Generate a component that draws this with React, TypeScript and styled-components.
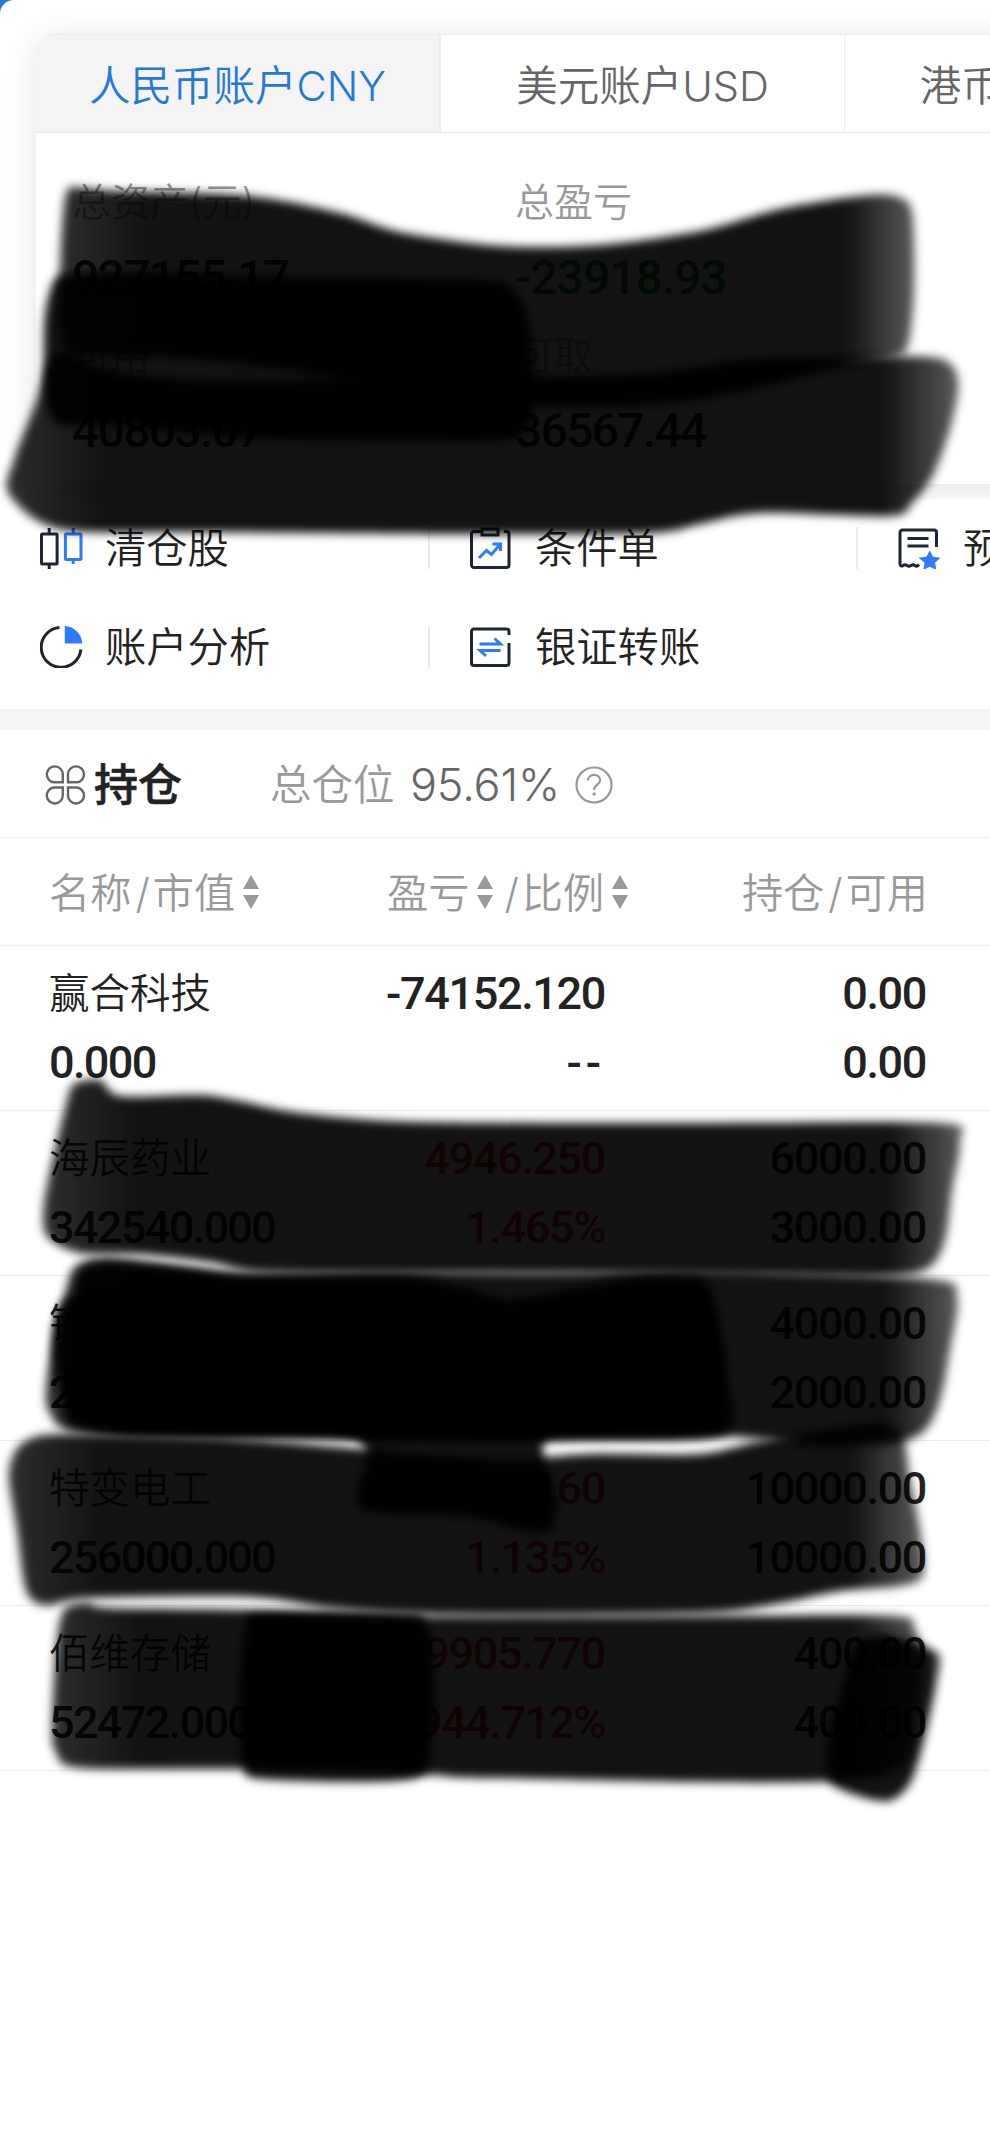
import React from "react";
import styled, { createGlobalStyle } from "styled-components";

const Global = createGlobalStyle`
  * { box-sizing: border-box; }
  body { margin: 0; background: #2479d8; overflow: hidden; }
`;

const cjk = `Inter, "Noto Sans CJK SC", sans-serif`;

const Page = styled.div`
  position: relative;
  width: 990px;
  height: 2142px;
  overflow: hidden;
  background: #fff;
  border-top-left-radius: 14px;
  font-family: ${cjk};
  color: #222;
`;

const AccountArea = styled.section`
  height: 499px;
  padding: 34px 0 0 36px;
  overflow: hidden;
`;

const AccountCard = styled.div`
  width: 1214px;
  height: 450px;
  background: #fff;
  border-top-left-radius: 18px;
  box-shadow: 0 4px 38px rgba(0, 0, 0, 0.11);
  overflow: hidden;
`;

const Tabs = styled.div`
  display: flex;
  height: 99px;
  border-top: 1px solid #ececec;
  border-bottom: 1px solid #e9e9e9;
`;

const Tab = styled.div<{ $active?: boolean }>`
  flex: 0 0 auto;
  width: ${(p) => (p.$active ? 405 : 404)}px;
  padding-top: 5px;
  border-right: ${(p) => (p.$active ? 2 : 1)}px solid #ececec;
  background: ${(p) => (p.$active ? "#f4f4f4" : "#fff")};
  color: ${(p) => (p.$active ? "#2479d8" : "#666")};
  font-size: 41.5px;
  font-weight: 350;
  line-height: 93px;
  text-align: center;
  white-space: nowrap;
`;

const Summary = styled.div`
  display: grid;
  grid-template-columns: 443px 1fr;
  grid-template-rows: 75px 77px 77px 75px;
  padding: 31px 0 0 36px;
  align-items: center;
`;

const SummaryLabel = styled.div`
  font-size: 39px;
  line-height: 1;
  font-weight: 350;
  color: #999;
`;

const SummaryValue = styled.div<{ $loss?: boolean }>`
  font: 500 48px/1 Roboto, sans-serif;
  letter-spacing: ${(p) => (p.$loss ? -1 : -1.7)}px;
  color: ${(p) => (p.$loss ? "#0a8a1c" : "#222")};
`;

const Actions = styled.section`
  display: grid;
  grid-template-columns: 430px 428px 428px;
  grid-template-rows: 98px 99px;
  height: 210px;
  width: 990px;
  overflow: hidden;
`;

const Action = styled.div<{ $last?: boolean }>`
  display: flex;
  align-items: center;
  align-self: center;
  height: 42px;
  padding-left: 40px;
  white-space: nowrap;
  font-size: 41.3px;
  line-height: 42px;
  border-right: ${(p) => (p.$last ? "0" : "2px solid #ebebeb")};

  svg {
    flex: none;
    margin-right: 22px;
  }
`;

const ActionText = styled.span`
  font-weight: 350;
`;

const Band = styled.div`
  height: 21px;
  background: #f4f4f4;
`;

const TitleBar = styled.header`
  display: flex;
  align-items: center;
  height: 108px;
  padding: 2px 0 0 45px;
  border-bottom: 1px solid #ececec;
  line-height: 60px;
`;

const Title = styled.h2`
  margin: 0 0 0 8px;
  width: 176px;
  font-size: 44px;
  font-weight: 500;
  -webkit-text-stroke: 0.6px #222;
`;

const PositionLabel = styled.span`
  width: 140px;
  font-size: 41.5px;
  font-weight: 350;
  color: #999;
`;

const PositionValue = styled.span`
  width: 165px;
  font-size: 45px;
  font-weight: 350;
  letter-spacing: -0.2px;
  color: #666;
`;

const HeadRow = styled.div`
  display: grid;
  grid-template-columns: 338px 292px 296px;
  height: 108px;
  padding: 2px 0 0 49px;
  align-items: center;
  border-bottom: 1px solid #ececec;
  font-size: 41.2px;
  font-weight: 350;
  line-height: 60px;
  color: #999;
`;

const HeadCell = styled.div<{ $right?: boolean }>`
  display: flex;
  align-items: center;
  justify-content: ${(p) => (p.$right ? "flex-end" : "flex-start")};
  padding-right: ${(p) => (p.$right ? 47 : 0)}px;
  width: ${(p) => (p.$right ? 345 : 300)}px;
  justify-self: ${(p) => (p.$right ? "end" : "start")};
  white-space: nowrap;
`;

const Slash = styled.span`
  padding: 0 3px 0 4px;
`;

const HoldingRow = styled.div`
  display: grid;
  grid-template-columns: 280px 276px 321px;
  grid-template-rows: 69px 69px;
  height: 165px;
  padding: 13px 0 0 49px;
  align-items: center;
  border-bottom: 1px solid #ececec;
`;

const StockName = styled.div`
  font-size: 40.5px;
  font-weight: 350;
  line-height: 60px;
  white-space: nowrap;
`;

const Figure = styled.div<{ $left?: boolean; $gain?: boolean }>`
  font: 500 45px/60px Roboto, sans-serif;
  padding-top: 1px;
  letter-spacing: ${(p) => (p.$left ? -1.65 : -1.35)}px;
  text-align: ${(p) => (p.$left ? "left" : "right")};
  color: ${(p) => (p.$gain ? "#e0141e" : "#222")};
  white-space: nowrap;
`;

const Dashes = styled.span`
  letter-spacing: 4px;
`;

const MarkerLayer = styled.svg`
  position: absolute;
  left: 0;
  top: 0;
  pointer-events: none;
`;

const navy = "#1d2433";
const blue = "#2f7bff";

const CandleIcon = () => (
  <svg width="43" height="42" viewBox="0 0 43 42" fill="none" strokeWidth="3">
    <g stroke={navy}>
      <rect x="1.5" y="7" width="15.6" height="30" rx="1" />
      <path d="M9.200 1v6M9.200 37v5" />
    </g>
    <g stroke={blue}>
      <rect x="25.400" y="7" width="15.600" height="25.500" rx="1" />
      <path d="M33.200 1v6M33.200 32v5" />
    </g>
  </svg>
);

const ConditionIcon = () => (
  <svg width="43" height="42" viewBox="0 0 43 42" fill="none" strokeWidth="3">
    <path
      d="M12 4.500H4a2.500 2.500 0 0 0-2.500 2.500v31A2.500 2.500 0 0 0 4 40.500h32.500A2.500 2.500 0 0 0 39 38V7a2.500 2.500 0 0 0-2.500-2.500H34M12 2h16v6H12z"
      stroke={navy}
    />
    <path d="m9 31 7.500-7.500 5 4L30 17.500M22.500 17H30.500v7" stroke={blue} />
  </svg>
);

const BookIcon = () => (
  <svg width="43" height="42" viewBox="0 0 43 42" fill="none" strokeWidth="3">
    <path
      d="M38.500 20V5.500A2.500 2.500 0 0 0 36 3H4.500A2.500 2.500 0 0 0 2 5.500V37.500Q3 40 5 38.500t4 0 4 0 4 0 4-1"
      stroke={navy}
    />
    <path d="M9.500 11.500H30.500M9.500 19H30.500" stroke={navy} />
    <path
      d="m31.800 23.500 3.200 6.300 7.500 1-5.500 5 1.500 7.200-6.700-3.300-6.700 3.300 1.500-7.200-6-5 7.800-1z"
      fill={blue}
    />
  </svg>
);

const PieIcon = () => (
  <svg width="43" height="42" viewBox="0 0 43 42" fill="none">
    <path d="M19.500 1.600A19.900 19.900 0 1 0 40.900 23.500" stroke={navy} strokeWidth="3" />
    <path d="M24.800 0A18.500 18.500 0 0 1 42.300 17.500H24.800z" fill={blue} />
  </svg>
);

const TransferIcon = () => (
  <svg width="43" height="42" viewBox="0 0 43 42" fill="none" strokeWidth="3">
    <path
      d="M39 9V5.500A2.500 2.500 0 0 0 36.500 3H4A2.500 2.500 0 0 0 1.500 5.500V37A2.500 2.500 0 0 0 4 39.500H36.500A2.500 2.500 0 0 0 39 37V17"
      stroke={navy}
    />
    <path d="M9.500 18H30.500L24.500 12.500M30.500 24.500H10l6 5.500" stroke={blue} />
  </svg>
);

const CloverIcon = () => (
  <svg width="41" height="40" viewBox="0 0 41 40" fill="none" stroke="#666" strokeWidth="2.400">
    <path d="M17.800 17.300H8.800A8 8 0 1 1 17.800 9.300z" />
    <path d="M23 17.300H32A8 8 0 1 0 23 9.300z" />
    <path d="M17.800 22.500H8.800A8 8 0 1 0 17.800 30.500z" />
    <path d="M23 22.500H32A8 8 0 1 1 23 30.500z" />
  </svg>
);

const HelpIcon = () => (
  <svg width="38" height="38" viewBox="0 0 38 38" fill="none" stroke="#999">
    <circle cx="19" cy="19" r="17.500" strokeWidth="2.200" />
    <path
      d="M13 14.500C13 7 25.200 7 25.200 14.300 25.200 18.500 19.200 18.500 19.200 24"
      strokeWidth="2.200"
    />
    <circle cx="19.200" cy="28" r="1.800" fill="#999" stroke="none" />
  </svg>
);

const SortSvg = styled.svg`
  flex: none;
  margin: 0 7px 2px 8px;
`;

const SortIcon = () => (
  <SortSvg width="16" height="34" viewBox="0 0 16 34" fill="#999">
    <path d="M8 0 16 14H0zM8 34 0 20H16z" />
  </SortSvg>
);

type Pt = [number, number];

/** Closed smooth curve through the given points. */
function smooth(pts: Pt[]): string {
  const n = pts.length;
  const at = (i: number) => pts[(i + n) % n];
  let d = `M${pts[0][0]} ${pts[0][1]}`;
  for (let i = 0; i < n; i++) {
    const [a, b, c, e] = [at(i - 1), at(i), at(i + 1), at(i + 2)];
    const k = 7;
    d += `C${b[0] + (c[0] - a[0]) / k} ${b[1] + (c[1] - a[1]) / k} ${c[0] - (e[0] - b[0]) / k} ${
      c[1] - (e[1] - b[1]) / k
    } ${c[0]} ${c[1]}`;
  }
  return d + "Z";
}

const markers: { soft?: boolean; pts: Pt[] }[] = [
  {
    soft: true,
    pts: [[66, 194], [82, 188], [120, 191], [250, 196], [340, 213], [400, 232], [500, 246], [600, 245], [700, 231], [780, 209], [860, 196], [895, 196], [912, 212], [914, 290], [908, 345], [893, 357], [820, 372], [740, 392], [650, 405], [500, 406], [400, 394], [300, 372], [180, 358], [90, 356], [62, 345], [60, 270]],
  },
  {
    pts: [[62, 275], [120, 272], [300, 277], [480, 280], [515, 292], [530, 330], [532, 400], [515, 438], [400, 441], [250, 438], [110, 425], [60, 425], [46, 400], [44, 330], [49, 295]],
  },
  {
    soft: true,
    pts: [[48, 364], [65, 352], [100, 368], [180, 379], [350, 379], [500, 378], [650, 373], [750, 359], [850, 357], [938, 358], [958, 380], [951, 425], [933, 475], [912, 503], [890, 516], [760, 513], [700, 524], [650, 533], [480, 534], [200, 532], [60, 529], [9, 494], [14, 460], [36, 402]],
  },
  {
    soft: true,
    pts: [[74, 1084], [100, 1080], [120, 1096], [200, 1095], [240, 1101], [300, 1113], [420, 1122], [700, 1123], [940, 1123], [960, 1141], [952, 1190], [945, 1240], [928, 1268], [880, 1276], [700, 1274], [400, 1273], [260, 1272], [210, 1262], [140, 1254], [80, 1253], [47, 1236], [44, 1205], [55, 1150], [66, 1105]],
  },
  {
    soft: true,
    pts: [[76, 1266], [110, 1258], [200, 1269], [250, 1274], [400, 1272], [560, 1273], [700, 1271], [930, 1279], [957, 1298], [950, 1350], [940, 1400], [925, 1430], [895, 1443], [820, 1446], [760, 1439], [700, 1436], [500, 1442], [340, 1439], [200, 1437], [75, 1432], [50, 1413], [46, 1390], [55, 1330], [66, 1290]],
  },
  {
    pts: [[84, 1268], [160, 1267], [250, 1276], [400, 1276], [470, 1289], [510, 1299], [580, 1287], [640, 1277], [700, 1279], [714, 1300], [720, 1360], [724, 1434], [560, 1438], [350, 1436], [200, 1434], [80, 1428], [64, 1400], [74, 1330]],
  },
  {
    pts: [[66, 1300], [250, 1290], [500, 1320], [700, 1300], [712, 1420], [552, 1432], [556, 1500], [550, 1532], [520, 1530], [470, 1517], [380, 1513], [357, 1500], [348, 1435], [90, 1425]],
  },
  {
    soft: true,
    pts: [[26, 1441], [60, 1434], [200, 1437], [280, 1442], [350, 1448], [500, 1459], [590, 1454], [700, 1454], [760, 1441], [850, 1426], [890, 1424], [904, 1440], [910, 1480], [920, 1530], [923, 1575], [900, 1586], [840, 1591], [770, 1605], [700, 1613], [500, 1615], [400, 1613], [330, 1608], [250, 1597], [90, 1598], [45, 1605], [26, 1590], [17, 1530], [9, 1480], [13, 1456]],
  },
  {
    soft: true,
    pts: [[64, 1610], [88, 1603], [110, 1608], [250, 1610], [400, 1616], [700, 1616], [893, 1616], [914, 1628], [922, 1655], [915, 1710], [870, 1778], [490, 1778], [430, 1775], [240, 1769], [80, 1768], [56, 1752], [52, 1730], [56, 1650]],
  },
  {
    pts: [[260, 1614], [400, 1614], [426, 1624], [434, 1680], [431, 1745], [410, 1779], [262, 1779], [243, 1762], [239, 1700], [245, 1630]],
  },
  {
    soft: true,
    pts: [[855, 1645], [880, 1634], [915, 1643], [939, 1655], [937, 1680], [924, 1740], [910, 1783], [888, 1801], [850, 1793], [828, 1778], [829, 1735], [845, 1680]],
  },
];

const Markers = () => (
  <MarkerLayer width="990" height="2142" viewBox="0 0 990 2142">
    <defs>
      <filter id="feather" x="-5%" y="-10%" width="110%" height="120%">
        <feGaussianBlur stdDeviation="4.6" />
      </filter>
      <linearGradient id="ends">
        <stop offset="0" stopColor="#000" stopOpacity="0.82" />
        <stop offset="0.1" stopColor="#000" stopOpacity="0.93" />
        <stop offset="0.92" stopColor="#000" stopOpacity="0.93" />
        <stop offset="1" stopColor="#000" stopOpacity="0.65" />
      </linearGradient>
    </defs>
    {markers.map((m, i) => (
      <path
        key={i}
        d={smooth(m.pts)}
        fill={m.soft ? "url(#ends)" : "rgba(0,0,0,0.93)"}
        filter="url(#feather)"
      />
    ))}
  </MarkerLayer>
);

interface Holding {
  name: string;
  value: string;
  profit: string;
  ratio: string;
  amount: string;
  usable: string;
  gain?: boolean;
}

const holdings: Holding[] = [
  { name: "赢合科技", value: "0.000", profit: "-74152.120", ratio: "--", amount: "0.00", usable: "0.00" },
  { name: "海辰药业", value: "342540.000", profit: "4946.250", ratio: "1.465%", amount: "6000.00", usable: "3000.00", gain: true },
  { name: "锦", value: "2", profit: "", ratio: "", amount: "4000.00", usable: "2000.00", gain: true },
  { name: "特变电工", value: "256000.000", profit: "2.160", ratio: "1.135%", amount: "10000.00", usable: "10000.00", gain: true },
  { name: "佰维存储", value: "52472.000", profit: "9905.770", ratio: "944.712%", amount: "400.00", usable: "400.00", gain: true },
];

export default function App() {
  return (
    <>
      <Global />
      <Page>
        <AccountArea>
          <AccountCard>
            <Tabs>
              <Tab $active>人民币账户CNY</Tab>
              <Tab>美元账户USD</Tab>
              <Tab>港币账户HKD</Tab>
            </Tabs>
            <Summary>
              <SummaryLabel>总资产(元)</SummaryLabel>
              <SummaryLabel>总盈亏</SummaryLabel>
              <SummaryValue>927155.17</SummaryValue>
              <SummaryValue $loss>-23918.93</SummaryValue>
              <SummaryLabel>可用</SummaryLabel>
              <SummaryLabel>可取</SummaryLabel>
              <SummaryValue>40803.07</SummaryValue>
              <SummaryValue>36567.44</SummaryValue>
            </Summary>
          </AccountCard>
        </AccountArea>
        <Actions>
          <Action><CandleIcon /><ActionText>清仓股</ActionText></Action>
          <Action><ConditionIcon /><ActionText>条件单</ActionText></Action>
          <Action $last><BookIcon /><ActionText>预</ActionText></Action>
          <Action><PieIcon /><ActionText>账户分析</ActionText></Action>
          <Action $last><TransferIcon /><ActionText>银证转账</ActionText></Action>
        </Actions>
        <Band />
        <TitleBar>
          <CloverIcon />
          <Title>持仓</Title>
          <PositionLabel>总仓位</PositionLabel>
          <PositionValue>95.61%</PositionValue>
          <HelpIcon />
        </TitleBar>
        <HeadRow>
          <HeadCell>名称<Slash>/</Slash>市值<SortIcon /></HeadCell>
          <HeadCell>盈亏<SortIcon /><Slash>/</Slash>比例<SortIcon /></HeadCell>
          <HeadCell $right>持仓<Slash>/</Slash>可用</HeadCell>
        </HeadRow>
        {holdings.map((h) => (
          <HoldingRow key={h.name}>
            <StockName>{h.name}</StockName>
            <Figure $gain={h.gain}>{h.profit}</Figure>
            <Figure>{h.amount}</Figure>
            <Figure $left>{h.value}</Figure>
            <Figure $gain={h.gain}>{h.ratio === "--" ? <Dashes>--</Dashes> : h.ratio}</Figure>
            <Figure>{h.usable}</Figure>
          </HoldingRow>
        ))}
        <Markers />
      </Page>
    </>
  );
}
